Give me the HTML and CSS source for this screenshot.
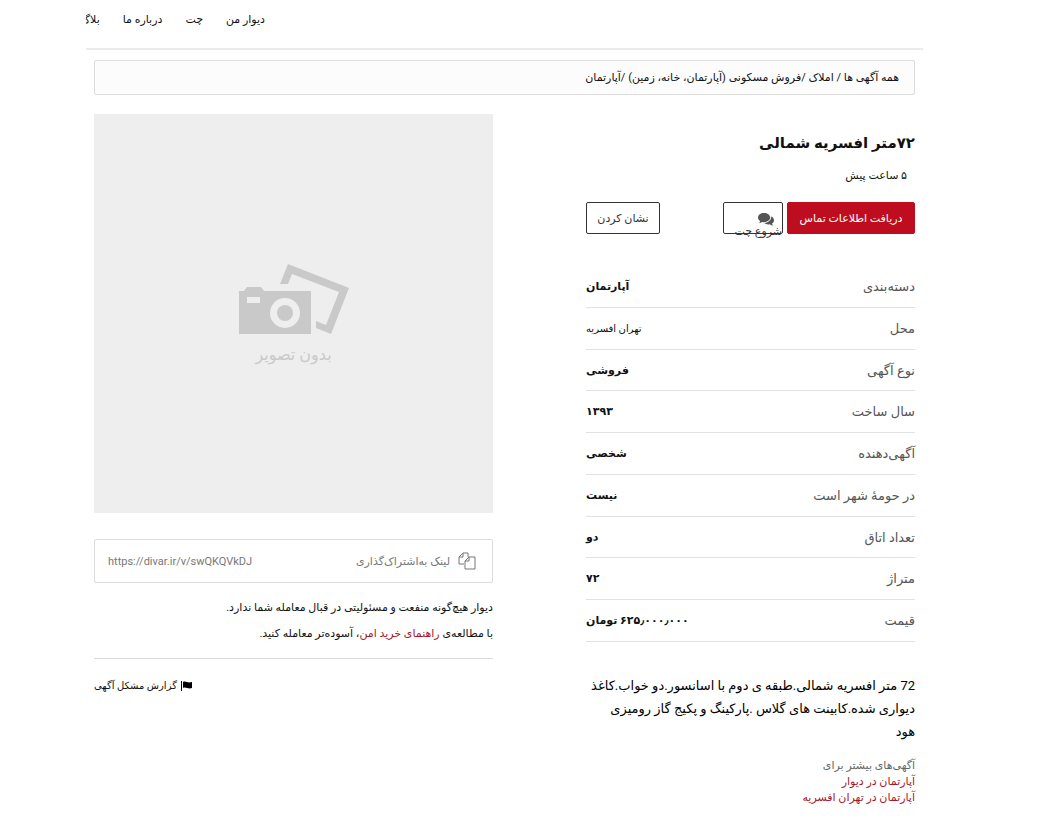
FILE: index.html
```html
<!DOCTYPE html>
<html lang="fa" dir="rtl">
<head>
<meta charset="UTF-8">
<title>۷۲متر افسریه شمالی</title>
<link rel="stylesheet" href="styles.css">
</head>
<body>

<header class="header">
	<nav class="menu">
		<a href="#">دیوار من</a>
		<a href="#">چت</a>
		<a href="#">درباره ما</a>
		<a href="#">بلاگ</a>
	</nav>
</header>

<div class="content">
	<nav class="breadcrumb">
		<a href="#">همه آگهی ها</a> / <a href="#">املاک</a> /<a href="#">فروش مسکونی (آپارتمان، خانه، زمین)</a> /<a href="#">آپارتمان</a>
	</nav>

	<main class="post">
		<section class="info">
			<h1 class="title">۷۲متر افسریه شمالی</h1>
			<p class="time">۵ ساعت پیش</p>

			<div class="actions">
				<button type="button" class="btn btn-red">دریافت اطلاعات تماس</button>
				<button type="button" class="btn btn-chat">
					<svg class="chat-icon" viewBox="0 0 16 13" width="16" height="13">
						<path d="M6 0C2.600 0 0 2 0 4.600c0 1.500.8 2.700 2.100 3.600-.2.800-.7 1.500-1.300 2.100 1.300-.1 2.500-.6 3.500-1.300.5.1 1.100.2 1.700.2 3.400 0 6.200-2.100 6.200-4.600S9.400 0 6 0z"/>
						<path d="M13.300 3.300c.2 3.800-3 6.500-7.100 6.800 1 .9 2.400 1.300 4 1.300.5 0 1-.1 1.500-.2 1 .8 2.200 1.300 3.500 1.400-.6-.6-1-1.300-1.200-2C15.200 9.900 16 8.800 16 7.500c0-1.700-1-3.300-2.700-4.200z"/>
					</svg>
					<span>شروع چت</span>
				</button>
				<button type="button" class="btn btn-mark">نشان کردن</button>
			</div>

			<table class="fields">
				<tr><th>دسته‌بندی</th><td>آپارتمان</td></tr>
				<tr><th>محل</th><td class="place">تهران افسریه</td></tr>
				<tr><th>نوع آگهی</th><td>فروشی</td></tr>
				<tr><th>سال ساخت</th><td>۱۳۹۳</td></tr>
				<tr><th>آگهی‌دهنده</th><td>شخصی</td></tr>
				<tr><th>در حومهٔ شهر است</th><td>نیست</td></tr>
				<tr><th>تعداد اتاق</th><td>دو</td></tr>
				<tr><th>متراژ</th><td>۷۲</td></tr>
				<tr><th>قیمت</th><td>۶۲۵٫۰۰۰٫۰۰۰ تومان</td></tr>
			</table>

			<p class="description">72 متر افسریه شمالی.طبقه ی دوم با اسانسور.دو خواب.کاغذ<br>دیواری شده.کابینت های گلاس .پارکینگ و پکیج گاز رومیزی<br>هود</p>

			<div class="more">
				<p>آگهی‌های بیشتر برای</p>
				<a href="#">آپارتمان در دیوار</a>
				<a href="#">آپارتمان در تهران افسریه</a>
			</div>
		</section>

		<aside class="side">
			<div class="no-image">
				<svg viewBox="0 0 110 71" width="110" height="71">
					<path fill="#c9c9c9" d="M0 27h5l3-4h14l3 4h47v43H0z"/>
					<path fill="#eee" d="M8 33h13v6H8z"/>
					<circle cx="46" cy="49" r="15" fill="#eee"/>
					<circle cx="46" cy="49" r="8" fill="#c9c9c9"/>
					<path fill="#c9c9c9" d="M41 20L49 0l61 24-18 46-15-6v-7l10 4 13-33-47-18-4 10z"/>
				</svg>
				<span>بدون تصویر</span>
			</div>

			<div class="share">
				<svg class="copy-icon" viewBox="0 0 18 18" width="18" height="18">
					<path d="M6 12H1V5l4-4h5v4M5 1v4H1M7 9l4-4h6v12H7zM11 5v4H7"/>
				</svg>
				<label for="link">لینک به‌اشتراک‌گذاری</label>
				<input type="text" id="link" class="link" dir="ltr" value="https://divar.ir/v/swQKQVkDJ" readonly>
			</div>

			<div class="notice">
				<p>دیوار هیچ‌گونه منفعت و مسئولیتی در قبال معامله شما ندارد.</p>
				<p>با مطالعه‌ی <a href="#">راهنمای خرید امن</a>، آسوده‌تر معامله کنید.</p>
			</div>

			<a href="#" class="report">
				<svg viewBox="0 0 11 10" width="11" height="10">
					<path d="M0 0h1v10H0zM2 1c3-1.500 4 1.500 9 0v6C7 8.500 5 5.500 2 7z"/>
				</svg>
				گزارش مشکل آگهی
			</a>
		</aside>
	</main>
</div>

</body>
</html>
```

FILE: styles.css
```css
* {box-sizing: border-box;}

body {
	margin: 0;
	padding: 0 115px 0 86px;
	background: #fff;
	color: #111;
	font-family: Roboto, "DejaVu Sans", sans-serif;
	font-size: 11px;
}

h1, p {margin: 0;}
a {color: inherit; text-decoration: none;}

.header {
	display: flex;
	justify-content: flex-end;
	height: 50px;
	border-bottom: 2px solid #ebebeb;
}
.menu {
	display: flex;
	gap: 23px;
	width: 179px;
	overflow: hidden;
	white-space: nowrap;
	line-height: 40px;
}
.menu a {flex: none;}

.content {padding: 10px 8px;}

.breadcrumb {
	padding: 0 15px;
	border: 1px solid #dcdcdc;
	border-radius: 2px;
	background: #fcfcfc;
	line-height: 33px;
}

.post {
	display: grid;
	grid-template-columns: 329fr 399fr;
	column-gap: 93px;
	align-items: start;
	margin-top: 19px;
}

.title {
	margin-top: 14px;
	font-size: 15px;
	font-weight: bold;
	line-height: 30px;
}
.time {padding: 8px 8px 0; line-height: 20px;}

.actions {
	display: flex;
	gap: 4px;
	margin-top: 16px;
}
.btn {
	height: 32px;
	padding: 0;
	border: 1px solid #333;
	border-radius: 2px;
	background: #fff;
	color: #333;
	font-family: inherit;
	font-size: 11px;
	white-space: nowrap;
}
.btn-red {width: 128px; border-color: #be0d1e; background: #be0d1e; color: #fff;}
.btn-chat {
	display: flex;
	flex-direction: column;
	align-items: flex-start;
	width: 60px;
	padding-top: 10px;
	line-height: 12px;
}
.chat-icon {flex: none; margin-right: 8px; fill: #555;}
.btn-mark {width: 74px; margin-right: auto;}

.fields {
	width: 100%;
	height: 375px;
	margin-top: 33px;
	border-collapse: collapse;
	font-size: 13px;
}
.fields th, .fields td {
	padding: 0;
	border-bottom: 1px solid #e2e2e2;
	text-align: right;
}
.fields th {color: #555; font-weight: normal;}
.fields td {text-align: left; font-size: 11px; font-weight: bold;}
.fields .place {font-size: 10px; font-weight: normal;}

.description {
	margin-top: 32px;
	color: #000;
	font-size: 13px;
	line-height: 23px;
	white-space: nowrap;
}

.more {
	display: flex;
	flex-direction: column;
	align-items: flex-start;
	margin-top: 15px;
	color: #666;
	line-height: 16px;
}
.more a, .notice a {color: #a8182b;}

.no-image {
	display: flex;
	flex-direction: column;
	align-items: center;
	justify-content: center;
	gap: 8px;
	aspect-ratio: 1;
	padding-top: 4px;
	background: #eee;
	color: #c9c9c9;
	font-size: 16px;
	line-height: 24px;
}

.share {
	display: flex;
	align-items: center;
	gap: 8px;
	height: 44px;
	margin-top: 26px;
	padding: 0 16px 0 13px;
	border: 1px solid #dcdcdc;
	border-radius: 2px;
	color: #777;
}
.copy-icon {fill: none; stroke: #777;}
.link {
	flex: 1;
	min-width: 0;
	padding: 0;
	border: 0;
	background: none;
	color: #777;
	font-family: Roboto, sans-serif;
	font-size: 11px;
}

.notice {
	margin-top: 12px;
	padding-bottom: 11px;
	border-bottom: 1px solid #dcdcdc;
	line-height: 26px;
}

.report {
	display: flex;
	align-items: center;
	justify-content: flex-end;
	gap: 4px;
	margin-top: 17px;
	font-size: 10px;
	line-height: 20px;
}
```
